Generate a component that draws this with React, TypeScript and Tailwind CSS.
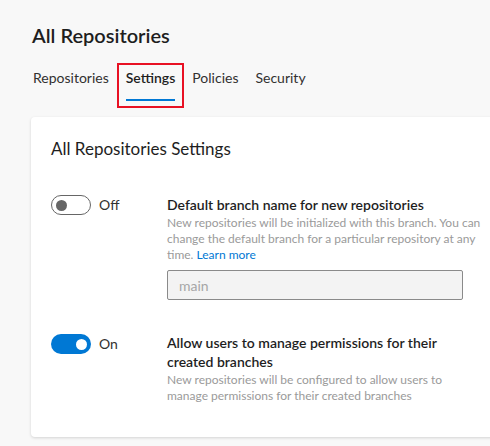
import { useState } from "react";

const font = { fontFamily: 'Lato, "Noto Sans", Arial, sans-serif' };

function Toggle({ on, onClick }: { on: boolean; onClick: () => void }) {
  return (
    <button
      onClick={onClick}
      className={`flex h-[20px] w-[40px] shrink-0 items-center rounded-full px-[4px] ${
        on ? "justify-end bg-[#0078d4]" : "justify-start border border-[#666666] bg-white"
      }`}
    >
      <span className={`block h-[11px] w-[11px] rounded-full ${on ? "bg-white" : "bg-[#666666]"}`} />
    </button>
  );
}

export default function App() {
  const [branchOn, setBranchOn] = useState(false);
  const [permOn, setPermOn] = useState(true);
  const tabs = ["Repositories", "Settings", "Policies", "Security"];

  return (
    <div style={font} className="h-[446px] w-full overflow-hidden bg-[#f8f8f8] pl-[31px] pt-[21px]">
      <h1 className="pl-[1px] text-[20px] font-semibold leading-[28px] text-[#1e1e1e]">All Repositories</h1>

      <div className="-ml-[5px] mt-[16px] flex gap-[3px]">
        {tabs.map((tab) => (
          <div
            key={tab}
            className={`flex h-[41px] flex-col items-center justify-between px-[7px] pt-[3px] ${
              tab === "Settings" ? "outline-2 outline-[#e81123]" : ""
            }`}
          >
            <span className={`text-[14px] leading-[20px] ${tab === "Settings" ? "font-semibold text-[#1e1e1e]" : "text-[#323130]"}`}>
              {tab}
            </span>
            <span className={`mb-[5px] block h-[2px] w-full ${tab === "Settings" ? "bg-[#0078d4]" : ""}`} />
          </div>
        ))}
      </div>

      <div className="mt-[11px] w-[480px] rounded-[4px] bg-white pb-[33px] pl-[20px] pt-[20px] shadow-[0_1px_3px_rgba(0,0,0,0.15)]">
        <h2 className="text-[17px] leading-[24px] text-[#1e1e1e]">All Repositories Settings</h2>

        <div className="mt-[34px] flex">
          <div className="flex w-[116px] shrink-0 items-start">
            <Toggle on={branchOn} onClick={() => setBranchOn(!branchOn)} />
            <span className="ml-[8px] text-[14px] leading-[20px] text-[#323130]">{branchOn ? "On" : "Off"}</span>
          </div>
          <div className="w-[318px]">
            <div className="text-[14px] font-semibold leading-[20px] text-[#1e1e1e]">Default branch name for new repositories</div>
            <p className="text-[12px] leading-[16px] text-[#9a9a9a]">
              New repositories will be initialized with this branch. You can change the default branch for a particular
              repository at any time. <span className="leading-[16px] text-[#0078d4]">Learn more</span>
            </p>
            <input
              disabled
              value="main"
              readOnly
              className="mt-[7px] h-[30px] w-[296px] rounded-[2px] border border-[#8a8a8a] bg-[#f3f3f3] px-[11px] text-[14px] text-[#a6a6a6]"
            />
          </div>
        </div>

        <div className="mt-[33px] flex">
          <div className="flex w-[116px] shrink-0 items-start pt-[1px]">
            <Toggle on={permOn} onClick={() => setPermOn(!permOn)} />
            <span className="ml-[8px] text-[14px] leading-[20px] text-[#323130]">{permOn ? "On" : "Off"}</span>
          </div>
          <div className="w-[318px]">
            <div className="text-[14px] font-semibold leading-[19px] text-[#1e1e1e]">
              Allow users to manage permissions for their created branches
            </div>
            <p className="mt-[1px] text-[12px] leading-[16px] text-[#9a9a9a]">
              New repositories will be configured to allow users to manage permissions for their created branches
            </p>
          </div>
        </div>
      </div>
    </div>
  );
}
